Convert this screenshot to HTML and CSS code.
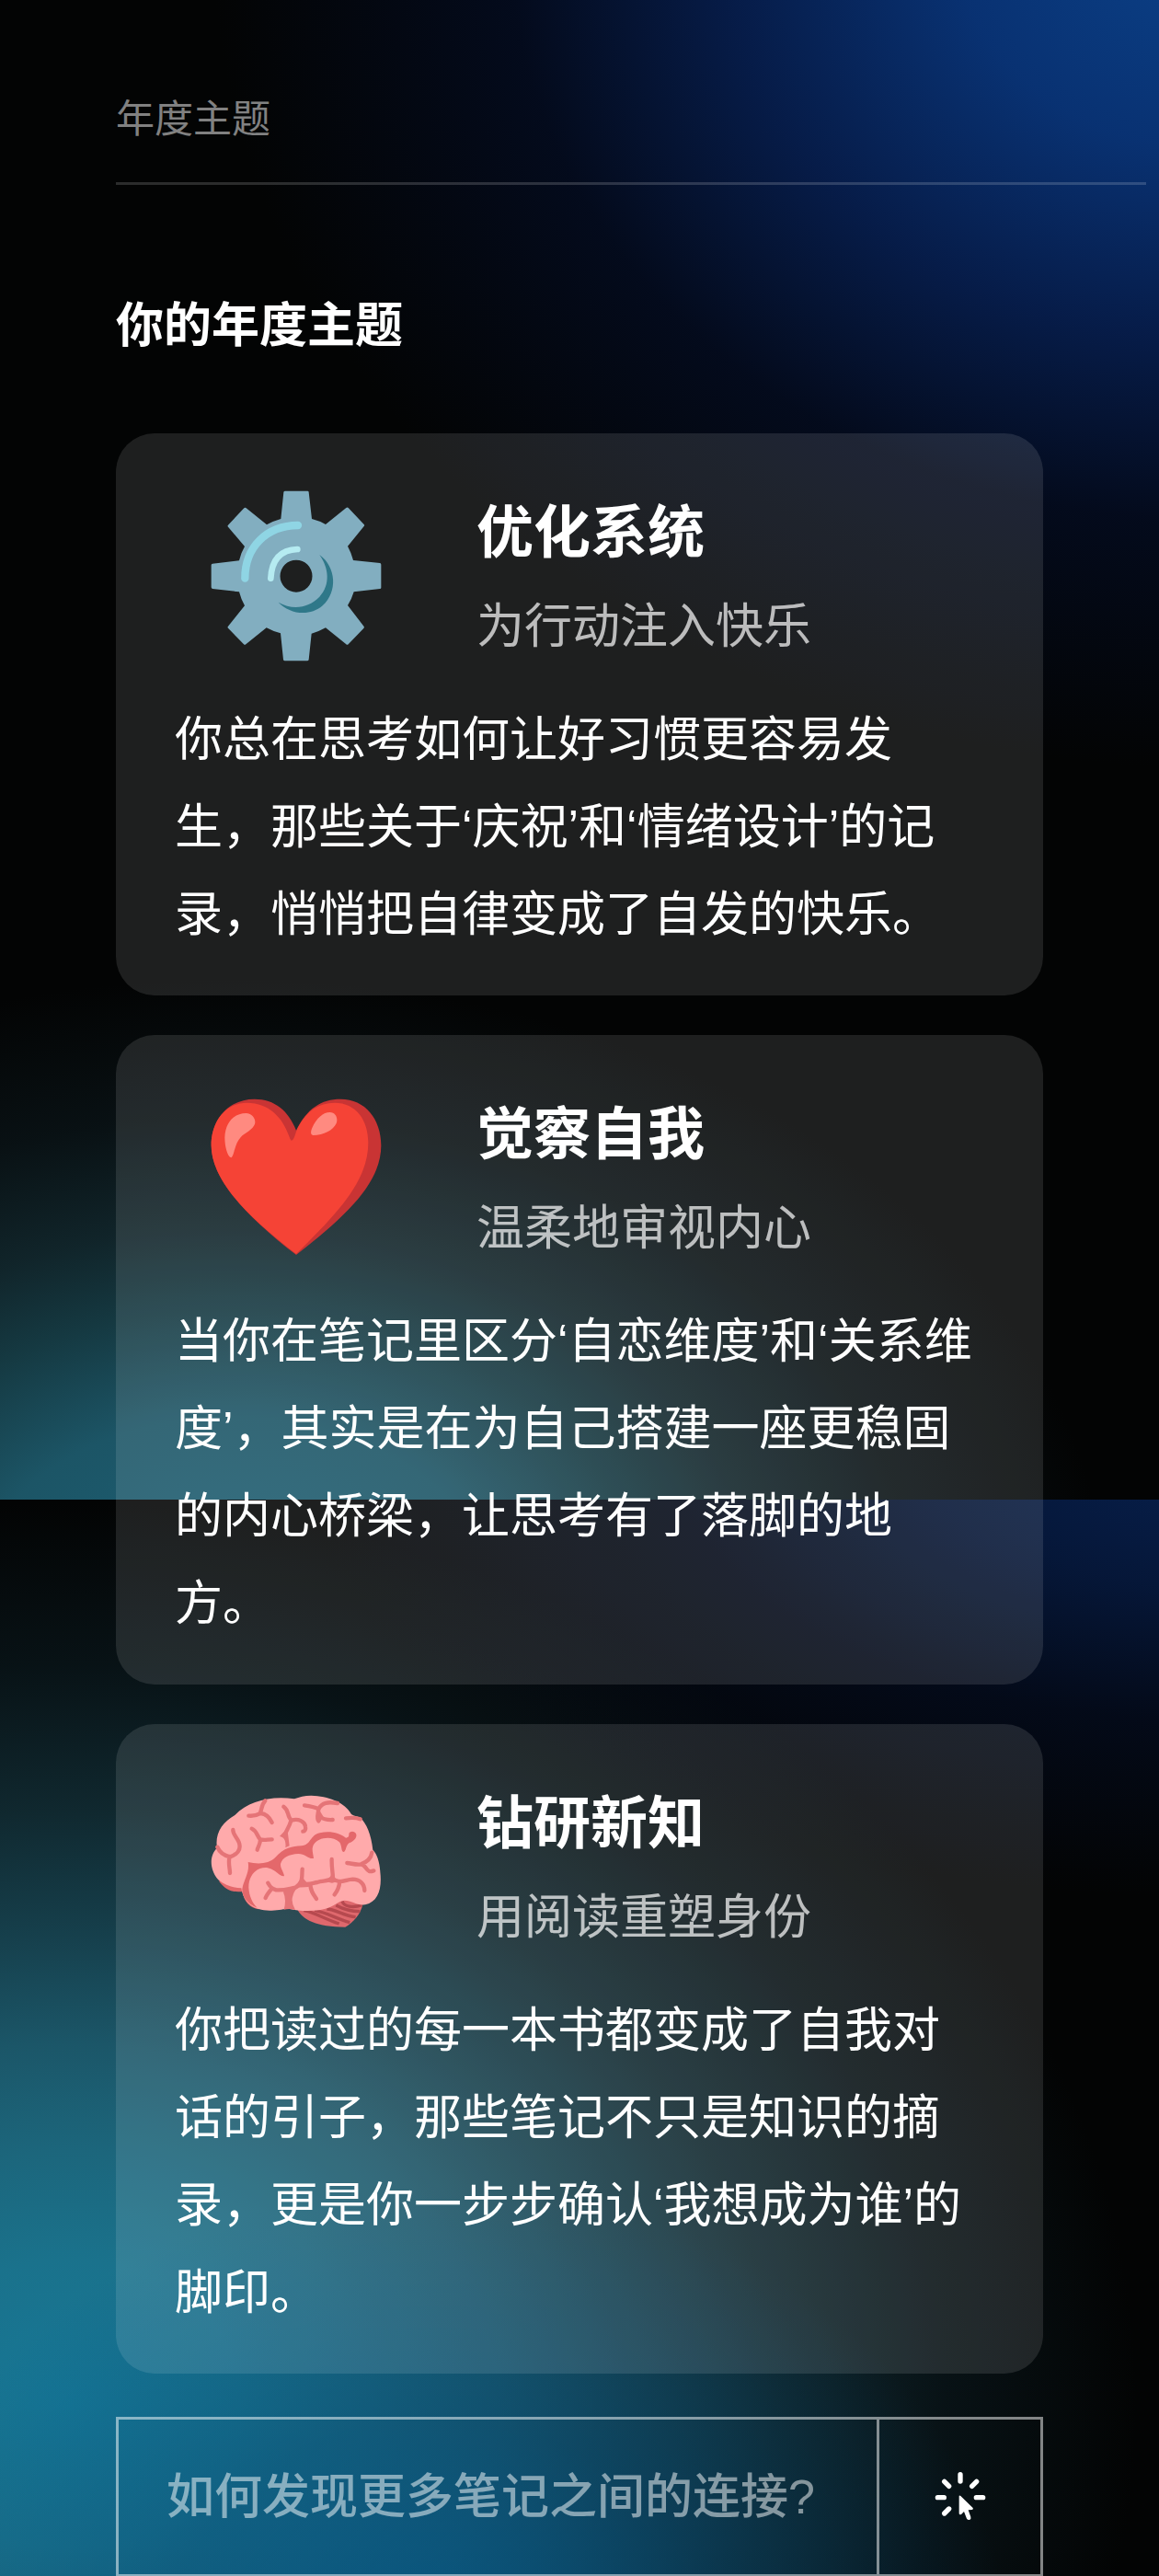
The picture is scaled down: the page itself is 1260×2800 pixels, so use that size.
FILE: index.html
```
<!DOCTYPE html>
<html lang="zh-CN">
<head>
    <meta charset="UTF-8">
    <meta name="viewport" content="width=device-width, initial-scale=1.0">
    <title>年度主题</title>
    <link rel="stylesheet" href="styles.css">
</head>
<body>

    <header class="topbar">年度主题</header>

    <main class="container">
        <h1>你的年度主题</h1>

        <section class="card">
            <div class="card-head">
                <svg class="icon" viewBox="68 49 594 594" aria-hidden="true">
                    <path fill="#82aec0" fill-rule="evenodd" d="M328 69h74q4 0 4 4l10 87q24 6 45 18l67-54q4-3 7 0l51 54q3 3 0 6l-53 65q12 22 18 46l87 9q4 1 4 5v75q0 4-4 4l-85 10q-7 24-20 44l53 69q2 3-1 6l-50 52q-4 3-7 0l-67-54q-21 12-46 19l-9 85q-1 4-5 4h-73q-4 0-5-4l-9-86q-24-6-46-18l-67 54q-4 3-7 0l-51-53q-3-3 0-6l54-67q-12-21-18-45l-87-10q-4-1-4-5v-72q0-4 4-5l87-10q5-24 18-46l-54-64q-3-3 0-6l52-55q4-3 7 0l67 54q21-12 46-19l9-87q1-4 5-4zM365 294a52 52 0 1 0 0 105a52 52 0 1 0 0-105z"/>
                    <path fill="none" stroke="#8fd5e4" stroke-width="25" stroke-linecap="round" stroke-linejoin="round" d="M198 354C198 252 268 182 371 181"/>
                    <path fill="none" stroke="#b5ebf1" stroke-width="20" stroke-linecap="round" d="M282 354C285 296 312 261 369 259"/>
                    <path fill="#2f7889" d="M441 277C496 317 501 398 451 443C407 481 342 469 307 432C354 459 407 450 441 414C478 374 471 319 441 277z"/>
                </svg>
                <div>
                    <h2>优化系统</h2>
                    <p class="subtitle">为行动注入快乐</p>
                </div>
            </div>
            <p class="text">你总在思考如何让好习惯更容易发生，那些关于‘庆祝’和‘情绪设计’的记录，悄悄把自律变成了自发的快乐。</p>
        </section>

        <section class="card">
            <div class="card-head">
                <svg class="icon" viewBox="68 33 594 594" aria-hidden="true">
                    <path fill="#c93434" d="M365 176C400 105 446 74 510 74C590 74 642 139 642 225C642 342 541 446 365 582C189 446 88 329 88 225C88 139 146 74 229 74C295 74 340 112 365 176z"/>
                    <path fill="#f54336" d="M349 209C359 210 362 182 372 164C400 112 438 86 490 86C561 86 600 143 600 216C600 342 500 446 365 579C189 446 88 329 88 225C88 144 137 86 204 86C278 86 322 137 341 193Q345 206 349 209z"/>
                    <path fill="#ff8a80" d="M153 265C140 263 132 226 132 199C134 148 164 120 201 120C228 122 237 147 227 161C215 181 193 183 178 206C163 228 162 261 153 265zM420 192C410 190 413 178 417 168C432 135 453 117 475 117C495 118 502 137 496 153C485 177 455 191 420 192z"/>
                </svg>
                <div>
                    <h2>觉察自我</h2>
                    <p class="subtitle">温柔地审视内心</p>
                </div>
            </div>
            <p class="text">当你在笔记里区分‘自恋维度’和‘关系维度’，其实是在为自己搭建一座更稳固的内心桥梁，让思考有了落脚的地方。</p>
        </section>

        <section class="card">
            <div class="card-head">
                <svg class="icon" viewBox="68 36 594 594" aria-hidden="true">
                    <path fill="#df686d" d="M370 474C385 505 433 530 525 530C550 515 576 488 582 455L520 438z"/>
                    <g fill="none" stroke="#b6494f" stroke-width="10">
                        <path d="M390 476C426 482 450 500 505 519"/>
                        <path d="M425 475C463 482 495 502 540 515"/>
                        <path d="M465 471C495 472 520 494 559 497"/>
                        <path d="M495 459C521 473 544 479 573 479"/>
                        <path d="M515 445C520 464 550 468 580 458"/>
                    </g>
                    <path fill="#e4686b" d="M113 380C135 410 160 418 190 414C194 447 214 468 243 472L320 430L210 320z"/>
                    <path fill="#ffaaab" d="M107 272C80 298 83 344 111 376C132 394 163 403 186 403C194 453 229 478 285 476C310 475 325 470 340 470C375 478 420 480 457 471C487 464 503 444 522 443C547 443 559 459 590 457C634 448 645 403 639 350C637 316 628 290 615 278C610 230 594 190 574 174C564 168 553 168 545 162C525 123 468 102 414 101C392 101 376 106 359 112C281 101 210 119 165 165C124 188 99 225 107 272z"/>
                    <!-- main fissure -->
                    <path fill="#e4686b" d="M208 318C240 326 276 324 296 304C326 270 352 267 382 265C414 263 409 230 442 223C477 215 507 224 527 239C547 235 527 221 548 218C571 222 562 247 539 255C526 263 529 279 521 285C510 285 516 267 506 253C481 230 435 238 422 261C414 276 420 286 422 306C404 309 395 291 372 291C342 293 320 302 314 324C313 339 324 349 326 363C313 368 298 341 269 336C233 334 209 364 210 402C212 429 221 450 238 467C205 454 188 429 189 406C194 375 214 352 208 318z"/>
                    <g fill="none" stroke="#e57477" stroke-width="13" stroke-linecap="round" stroke-linejoin="round">
                        <path d="M264 118C249 134 254 150 246 160C236 166 222 168 210 167M249 159C268 161 279 174 286 189"/>
                        <path d="M324 137C344 151 333 168 350 182C373 175 393 186 395 202C397 212 393 218 387 218M348 183C342 206 329 219 329 230"/>
                        <path d="M392 133C408 135 422 137 438 145C449 123 469 121 500 126M438 145C437 161 430 175 438 184M438 170C454 178 468 182 484 180"/>
                        <path d="M220 209C239 218 237 235 248 244C260 248 272 244 286 244M248 244C248 260 241 267 238 278"/>
                        <path d="M159 213C158 227 170 234 178 253C188 279 170 294 149 301C129 297 115 286 108 269M148 300C142 321 149 337 149 354"/>
                        <path d="M527 175C545 173 559 172 574 178"/>
                        <path d="M531 321C545 322 561 328 576 325C599 317 610 301 612 287M576 325C591 327 592 342 602 347C609 350 614 347 618 346"/>
                        <path d="M273 386C281 401 287 405 300 409C326 411 340 405 362 401C388 389 383 365 385 341M285 405C276 416 269 424 265 435"/>
                        <path d="M380 387C401 394 413 388 434 384C455 378 468 382 485 370C484 349 480 331 481 309M485 372C506 391 526 375 549 374C572 374 588 389 588 411M507 381C505 402 499 413 490 424"/>
                        <path d="M411 391C412 412 420 422 431 438"/>
                    </g>
                    <path fill="#e57477" d="M311 234Q321 222 336 209L343 265L330 271C332 252 328 237 311 234zM331 404L375 396Q360 408 355 425Q346 448 362 474Q345 469 325 473Q334 440 323 416zM431 140L446 140L442 151L454 170L442 188L431 176zM370 386L384 366L402 388L424 384L405 399L355 402zM480 357L485 357L491 371L512 378L482 386L456 380Q476 373 480 357z"/>
                </svg>
                <div>
                    <h2>钻研新知</h2>
                    <p class="subtitle">用阅读重塑身份</p>
                </div>
            </div>
            <p class="text">你把读过的每一本书都变成了自我对话的引子，那些笔记不只是知识的摘录，更是你一步步确认‘我想成为谁’的脚印。</p>
        </section>

        <form class="ask">
            <input type="text" placeholder="如何发现更多笔记之间的连接?" aria-label="提问">
            <button type="button" aria-label="发送">
                <svg viewBox="286 260 168 168" aria-hidden="true">
                    <path fill="none" stroke="#fff" stroke-width="16" stroke-linecap="round" d="M370 271v22M318 294l15 15M423 294l-15 15M296 346h21M422 346h22M333 383l-15 15"/>
                    <path fill="#fff" d="M366 342Q366 337 371 341L411 380Q414 385 408 386L396 387L404 409Q406 417 400 419Q394 420 391 415L382 392L373 401Q366 404 366 397z"/>
                </svg>
            </button>
        </form>
    </main>

</body>
</html>
```
FILE: styles.css
```
* { box-sizing: border-box; }
body {
    margin: 0;
    font-family: "Liberation Sans", "Noto Sans CJK SC", sans-serif;
    font-size: 52px; line-height: 95px; color: white;
    background-color: #030404;
    /* upper screen glow, then the lower one starting at 1630px */
    background-image:
        radial-gradient(1080px 900px at 104% -4%, #0b4188 0%, rgba(9, 52, 120, 0.95) 25%, rgba(7, 32, 84, 0.85) 48%, rgba(4, 15, 44, 0.6) 70%, rgba(2, 4, 12, 0) 100%),
        radial-gradient(950px 680px at 20% 107%, #1b6076 0%, #1c5566 30%, rgba(22, 60, 69, 0.95) 47%, rgba(18, 40, 46, 0.9) 60%, rgba(11, 22, 26, 0.7) 78%, rgba(4, 6, 8, 0) 100%),
        radial-gradient(1000px 480px at 106% -4%, #07204e 0%, rgba(6, 25, 62, 0.9) 30%, rgba(4, 14, 38, 0.6) 60%, rgba(2, 4, 12, 0) 100%),
        radial-gradient(620px 520px at 38% 108%, rgba(0, 88, 142, 0.7) 0%, rgba(0, 72, 120, 0.4) 50%, rgba(0, 50, 90, 0) 100%),
        radial-gradient(1160px 980px at 6% 84%, #167796 0%, #1a728c 16%, #1c667c 28%, #1b5668 40%, rgba(24, 70, 84, 0.9) 52%, rgba(18, 46, 54, 0.85) 66%, rgba(10, 24, 29, 0.7) 82%, rgba(4, 8, 10, 0) 100%);
    background-size: 100% 1630px, 100% 1630px, 100% 1170px, 100% 1170px, 100% 1170px;
    background-position: 0 0, 0 0, 0 1630px, 0 1630px, 0 1630px;
    background-repeat: no-repeat;
}
h1, h2, p { margin: 0; }
.topbar {
    margin: 0 14px 0 10%; padding: 82px 0 20px;
    font-size: 42px; line-height: 96px;
    color: rgba(255, 255, 255, 0.5);
    border-bottom: 3px solid rgba(255, 255, 255, 0.16);
}
.container { padding: 0 10%; }
h1 { padding: 106px 0 69px; font-size: 52px; }
.card {
    margin-bottom: 43px; padding: 54px 64px 40px;
    background: rgba(255, 255, 255, 0.11);
    border-radius: 42px;
}
.card-head {
    display: grid; grid-template-columns: 30% 1fr;
    column-gap: 64px; align-items: center;
    margin-bottom: 30px;
}
.icon { width: 198px; justify-self: center; display: block; }
h2 { font-size: 62px; line-height: 110px; }
.subtitle { line-height: 92px; color: rgba(255, 255, 255, 0.7); }
.ask {
    display: flex; height: 174px; margin-top: 47px;
    border: 3px solid rgba(255, 255, 255, 0.5);
}
.ask input {
    flex: 1; min-width: 0; padding: 0 52px;
    background: none; border: none; outline: none;
    font: inherit; font-weight: 500; color: white;
}
.ask input::placeholder { color: rgba(255, 255, 255, 0.5); opacity: 1; }
.ask button {
    width: 178px; padding: 0;
    display: flex; align-items: center; justify-content: center;
    background: none; border: none; cursor: pointer;
    border-left: 3px solid rgba(255, 255, 255, 0.5);
}
.ask button svg { width: 56px; height: 56px; }
```
